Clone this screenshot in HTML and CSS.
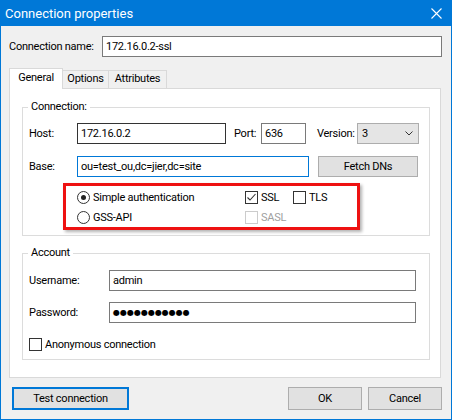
FILE: index.html
```html
<!DOCTYPE html>
<html lang="en">
<head>
    <meta charset="UTF-8">
    <title>Connection properties</title>
    <link rel="stylesheet" href="styles.css">
</head>
<body>
    <div class="titlebar">
        <span class="title">Connection properties</span>
        <svg class="close" width="11" height="11" viewBox="0 0 11 11">
            <path d="M0.5 0.5L10.5 10.5M10.5 0.5L0.5 10.5" stroke="#fff" stroke-width="1.1"/>
        </svg>
    </div>
    <div class="dialog">
        <div class="name-row">
            <span class="name-lbl">Connection name:</span>
            <div class="input name-input">172.16.0.2-ssl</div>
        </div>

        <div class="tabs">
            <div class="tab active">General</div>
            <div class="tab tab-options">Options</div>
            <div class="tab tab-attrs">Attributes</div>
        </div>

        <div class="panel">
            <div class="group conn">
                <div class="legend">Connection:</div>
                <div class="row host-row">
                    <span class="lbl">Host:</span>
                    <div class="input host">172.16.0.2</div>
                    <span class="port-lbl">Port:</span>
                    <div class="input port">636</div>
                    <span class="ver-lbl">Version:</span>
                    <div class="combo">
                        <span>3</span>
                        <svg width="8" height="5" viewBox="0 0 8 5"><path d="M0.5 0.5L4 4L7.5 0.5" fill="none" stroke="#333" stroke-width="1"/></svg>
                    </div>
                </div>
                <div class="row base-row">
                    <span class="lbl">Base:</span>
                    <div class="input base">ou=test_ou,dc=jier,dc=site</div>
                    <div class="btn fetch">Fetch DNs</div>
                </div>
                <div class="auth">
                    <div class="opt"><span class="radio checked"></span>Simple authentication</div>
                    <div class="opt"><span class="check checked"><svg width="11" height="11" viewBox="0 0 11 11"><path d="M1.5 5.5L4 8L9.5 2" fill="none" stroke="#333" stroke-width="1.1"/></svg></span>SSL</div>
                    <div class="opt"><span class="check"></span>TLS</div>
                    <div class="opt"><span class="radio"></span>GSS-API</div>
                    <div class="opt disabled"><span class="check"></span>SASL</div>
                </div>
            </div>

            <div class="group account">
                <div class="legend">Account</div>
                <div class="row user-row">
                    <span class="lbl">Username:</span>
                    <div class="input wide">admin</div>
                </div>
                <div class="row pass-row">
                    <span class="lbl">Password:</span>
                    <div class="input wide dots">●●●●●●●●●●●</div>
                </div>
                <div class="row anon-row">
                    <span class="check"></span>Anonymous connection
                </div>
            </div>
        </div>

        <div class="footer">
            <div class="btn test">Test connection</div>
            <div class="btn ok">OK</div>
            <div class="btn cancel">Cancel</div>
        </div>
    </div>
</body>
</html>
```

FILE: styles.css
```css
* {
    box-sizing: border-box;
}
html, body {
    margin: 0;
}
body {
    width: 452px;
    height: 420px;
    font-family: Roboto, "Liberation Sans", sans-serif;
    font-size: 11px;
    letter-spacing: -0.25px;
    color: #000;
    background: #f0f0f0;
}
.titlebar {
    height: 26px;
    background: #0078d7;
    color: #fff;
    display: flex;
    align-items: center;
    justify-content: space-between;
    padding: 0 10px 0 5px;
    font-size: 13px;
    letter-spacing: 0;
}
.close {
    display: block;
}
.dialog {
    height: 394px;
    border: 1px solid #0078d7;
    border-top: 0;
    padding: 10px 9px 0 8px;
}
.name-row {
    display: flex;
    align-items: center;
    height: 21px;
}
.name-lbl {
    width: 93px;
}
.name-input {
    flex: 1;
}
.input {
    height: 21px;
    border: 1px solid #7a7a7a;
    background: #fff;
    padding: 0 3px;
    line-height: 19px;
    white-space: nowrap;
}

/* tabs */
.tabs {
    display: flex;
    align-items: flex-end;
    height: 20px;
    margin-top: 11px;
}
.tab {
    height: 18px;
    line-height: 16px;
    border: 1px solid #d9d9d9;
    border-bottom: 0;
    background: #f0f0f0;
    text-align: center;
}
.tab.active {
    position: relative;
    z-index: 1;
    width: 54px;
    height: 21px;
    line-height: 17px;
    margin-bottom: -1px;
    background: #fff;
}
.tab-options {
    width: 47px;
    margin-left: -1px;
}
.tab-attrs {
    width: 59px;
    margin-left: -1px;
}
.panel {
    height: 290px;
    margin-right: 1px;
    background: #fff;
    border: 1px solid #d9d9d9;
    padding-top: 18px;
}

/* group boxes */
.group {
    border: 1px solid #dcdcdc;
    margin: 0 10px 0 12px;
}
.group.conn {
    height: 129px;
}
.group.account {
    height: 107px;
    margin-top: 17px;
}
.legend {
    width: max-content;
    margin: -9px 0 0 5px;
    padding: 0 3px;
    line-height: 16px;
    background: #fff;
}
.row {
    display: flex;
    align-items: center;
    height: 21px;
    padding-left: 6px;
}
.conn .lbl {
    width: 48px;
}
.host-row {
    margin-top: 8px;
}
.host {
    width: 149px;
    border-color: #333;
}
.port-lbl {
    width: 27px;
    margin-left: 8px;
}
.port {
    width: 45px;
}
.ver-lbl {
    width: 40px;
    margin-left: 11px;
}
.combo {
    width: 62px;
    height: 21px;
    display: flex;
    align-items: center;
    justify-content: space-between;
    padding: 0 5px 0 4px;
    background: #e5e5e5;
    border: 1px solid #adadad;
}
.base-row {
    margin-top: 12px;
}
.base {
    width: 232px;
    border-color: #0078d7;
}
.btn {
    height: 21px;
    line-height: 19px;
    text-align: center;
    background: #e1e1e1;
    border: 1px solid #adadad;
}
.fetch {
    width: 100px;
    margin-left: 9px;
}

/* auth options, highlighted */
.auth {
    width: 297px;
    height: 47px;
    margin: 6px 0 0 40px;
    border: 3px solid #ee1111;
    box-shadow: 2px 2px 3px rgba(0, 0, 0, 0.3);
    padding: 1px 0 0 11px;
    display: grid;
    grid-template-columns: 168px 48px 1fr;
    grid-auto-rows: 20px;
}
.opt {
    display: flex;
    align-items: center;
    white-space: nowrap;
}
.radio, .check {
    width: 13px;
    height: 13px;
    margin-right: 3px;
    border: 1px solid #333;
    background: #fff;
    flex-shrink: 0;
}
.radio {
    border-radius: 50%;
    display: flex;
    align-items: center;
    justify-content: center;
}
.radio.checked::after {
    content: "";
    width: 5px;
    height: 5px;
    border-radius: 50%;
    background: #222;
}
.check svg {
    display: block;
}
.disabled {
    color: #a0a0a0;
}
.disabled .check {
    border-color: #cccccc;
}

/* account */
.account .lbl {
    width: 80px;
}
.user-row {
    margin-top: 9px;
}
.pass-row {
    margin-top: 11px;
}
.wide {
    width: 307px;
}
.dots {
    font-family: "DejaVu Sans", sans-serif;
    font-size: 8px;
    letter-spacing: 0;
}
.anon-row {
    height: 14px;
    margin-top: 14px;
}

/* bottom buttons */
.footer {
    display: flex;
    gap: 6px;
    margin-top: 9px;
}
.footer .btn {
    height: 23px;
    line-height: 21px;
    width: 74px;
}
.footer .test {
    width: 117px;
    margin-left: 3px;
    margin-right: auto;
    border: 2px solid #0078d7;
    line-height: 19px;
}
```
